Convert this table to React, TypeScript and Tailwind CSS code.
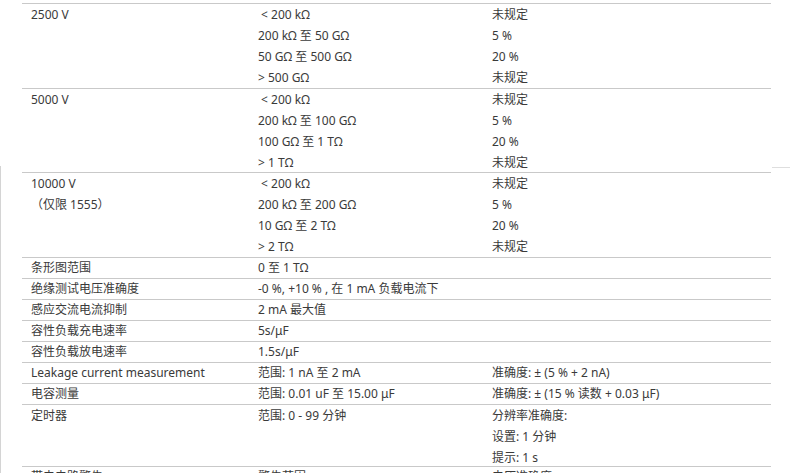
import React from 'react';

type Row = {
  label: string[];
  range: string[];
  note: string[];
  h: string;
};

const rows: Row[] = [
  {
    label: ['2500 V'],
    range: ['\u00a0< 200 kΩ', '200 kΩ 至 50 GΩ', '50 GΩ 至 500 GΩ', '> 500 GΩ'],
    note: ['未规定', '5 %', '20 %', '未规定'],
    h: 'h-[85px]',
  },
  {
    label: ['5000 V'],
    range: ['\u00a0< 200 kΩ', '200 kΩ 至 100 GΩ', '100 GΩ 至 1 TΩ', '> 1 TΩ'],
    note: ['未规定', '5 %', '20 %', '未规定'],
    h: 'h-[84px]',
  },
  {
    label: ['10000 V', '（仅限 1555）'],
    range: ['\u00a0< 200 kΩ', '200 kΩ 至 200 GΩ', '10 GΩ 至 2 TΩ', '> 2 TΩ'],
    note: ['未规定', '5 %', '20 %', '未规定'],
    h: 'h-[85px]',
  },
  { label: ['条形图范围'], range: ['0 至 1 TΩ'], note: [], h: 'h-[21px]' },
  { label: ['绝缘测试电压准确度'], range: ['-0 %, +10 % , 在 1 mA 负载电流下'], note: [], h: 'h-[21px]' },
  { label: ['感应交流电流抑制'], range: ['2 mA 最大值'], note: [], h: 'h-[21px]' },
  { label: ['容性负载充电速率'], range: ['5s/μF'], note: [], h: 'h-[21px]' },
  { label: ['容性负载放电速率'], range: ['1.5s/μF'], note: [], h: 'h-[21px]' },
  {
    label: ['Leakage current measurement'],
    range: ['范围: 1 nA 至 2 mA'],
    note: ['准确度: ± (5 % + 2 nA)'],
    h: 'h-[21px]',
  },
  {
    label: ['电容测量'],
    range: ['范围: 0.01 uF 至 15.00 μF'],
    note: ['准确度: ± (15 % 读数 + 0.03 μF)'],
    h: 'h-[21px]',
  },
  {
    label: ['定时器'],
    range: ['范围: 0 - 99 分钟'],
    note: ['分辨率准确度:', '设置: 1 分钟', '提示: 1 s'],
    h: 'h-[62px]',
  },
  { label: ['带电电路警告'], range: ['警告范围'], note: ['电压准确度'], h: 'h-[21px]' },
];

function Cell({ lines, single }: { lines: string[]; single: boolean }) {
  return (
    <div className={`pl-[9px] ${single ? '-mt-px' : ''}`}>
      {lines.map((t, i) => (
        <div key={i} className="leading-[21px] whitespace-pre">
          {t}
        </div>
      ))}
    </div>
  );
}

export default function App() {
  return (
    <div
      className="relative w-[790px] h-[473px] overflow-hidden bg-white text-[12px] text-[#3a3a3a]"
      style={{ fontFamily: '"Noto Sans", "Noto Sans CJK SC", sans-serif' }}
    >
      {/* frame edges of the box behind */}
      <div className="absolute left-0 top-[166px] bottom-0 w-px bg-[#d4d4d4]" />
      <div className="absolute left-[772px] top-[167px] w-[18px] h-px bg-[#dedede]" />

      <div className="pt-[3px] pl-[22px]">
        <div className="w-[749px]">
          {rows.map((r, i) => {
            const single = r.h === 'h-[21px]';
            return (
              <div
                key={i}
                className={`grid grid-cols-[227px_234px_288px] border-t border-[#c9c9c9] overflow-hidden ${r.h}`}
              >
                <Cell lines={r.label} single={single} />
                <Cell lines={r.range} single={single} />
                <Cell lines={r.note} single={single} />
              </div>
            );
          })}
        </div>
      </div>
    </div>
  );
}
